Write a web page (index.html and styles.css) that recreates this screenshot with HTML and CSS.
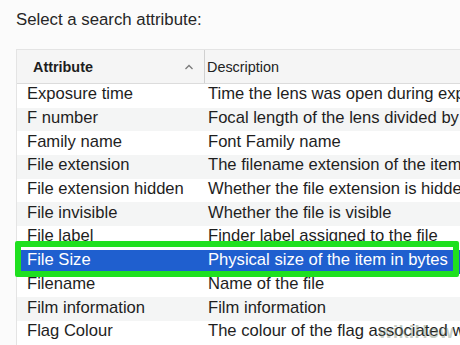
FILE: index.html
```html
<!DOCTYPE html>
<html>
<head>
<meta charset="utf-8">
<link rel="stylesheet" href="styles.css">
</head>
<body>
<div class="page">
  <div class="title">Select a search attribute:</div>
  <div class="table">
    <div class="head">
      <div class="hcell hc1"><span>Attribute</span><span class="caret"><svg width="12" height="8" viewBox="0 0 12 8"><path d="M2.5 6 L6 2.5 L9.5 6" fill="none" stroke="#7a7a7a" stroke-width="1.3"/></svg></span></div>
      <div class="hcell hc2">Description</div>
    </div>
    <div class="row"><div class="c1">Exposure time</div><div class="c2">Time the lens was open during exposure</div></div>
    <div class="row alt"><div class="c1">F number</div><div class="c2">Focal length of the lens divided by the diameter</div></div>
    <div class="row"><div class="c1">Family name</div><div class="c2">Font Family name</div></div>
    <div class="row alt"><div class="c1">File extension</div><div class="c2">The filename extension of the item</div></div>
    <div class="row"><div class="c1">File extension hidden</div><div class="c2">Whether the file extension is hidden</div></div>
    <div class="row alt"><div class="c1">File invisible</div><div class="c2">Whether the file is visible</div></div>
    <div class="row"><div class="c1">File label</div><div class="c2">Finder label assigned to the file</div></div>
    <div class="row sel"><div class="c1">File Size</div><div class="c2">Physical size of the item in bytes</div></div>
    <div class="row"><div class="c1">Filename</div><div class="c2">Name of the file</div></div>
    <div class="row alt"><div class="c1">Film information</div><div class="c2">Film information</div></div>
    <div class="row"><div class="c1">Flag Colour</div><div class="c2">The colour of the flag associated with the item</div></div>
  </div>
  <div class="frame"></div>
  <div class="mark">wikiHow</div>
</div>
</body>
</html>
```
FILE: styles.css
```css
html, body { margin: 0; padding: 0; }
body {
  width: 460px;
  height: 345px;
  overflow: hidden;
  background: #fbfbfb;
  font-family: "Liberation Sans", Arial, sans-serif;
  color: #1e1e1e;
}
.page { position: relative; width: 460px; height: 345px; overflow: hidden; }
.title {
  padding: 9px 0 0 16px;
  height: 41px;
  font-size: 16.8px;
  line-height: 22px;
  color: #262626;
  box-sizing: border-box;
}
.table {
  margin-left: 16px;
  margin-top: 8px;
  background: #fff;
  border-left: 1px solid #e4e4e4;
  border-top: 1px solid #e4e4e4;
}
.head {
  display: flex;
  height: 33px;
  background: #f5f5f5;
  border-bottom: 1px solid #dcdcdc;
  font-size: 14.4px;
}
.hcell { display: flex; align-items: center; }
.hc1 {
  width: 188px;
  padding-left: 16px;
  box-sizing: border-box;
  font-weight: bold;
  justify-content: space-between;
  padding-right: 9px;
  border-right: 1px solid #d0d0d0;
}
.caret { display: flex; align-items: center; }
.hc2 { padding-left: 2px; color: #222; }
.row {
  display: flex;
  height: 23.7px;
  align-items: center;
  box-sizing: border-box;
  padding-bottom: 3px;
  font-size: 16.6px;
  white-space: nowrap;
}
.row.alt { background: #f4f5f5; }
.c1 { width: 191px; padding-left: 10px; box-sizing: border-box; flex: none; }
.c2 { flex: none; }
.row.sel {
  color: #fff;
  background: #1f5fcf;
}
.frame {
  position: absolute;
  left: 15px;
  top: 241px;
  width: 444px;
  height: 36px;
  box-sizing: border-box;
  border: 6px solid #1fe01f;
  border-radius: 2px;
}
.mark {
  position: absolute;
  right: 6px;
  bottom: 2px;
  font-size: 18px;
  font-weight: bold;
  letter-spacing: 0.5px;
  color: rgba(110,130,110,0.4);
}
```
